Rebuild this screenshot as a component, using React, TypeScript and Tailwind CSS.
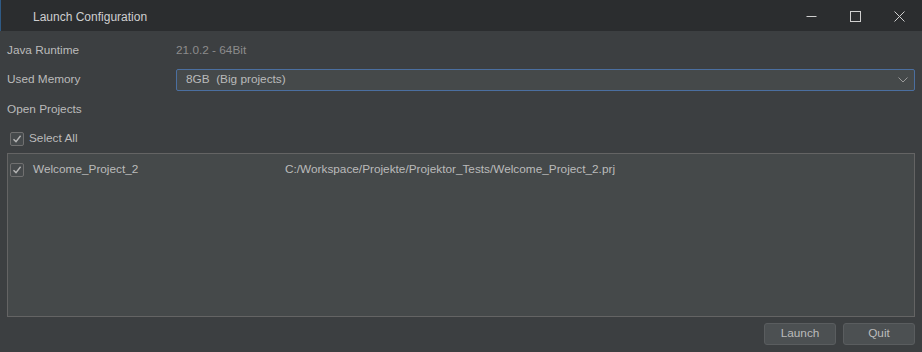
import { useState } from "react";

function Check({ checked }: { checked: boolean }) {
  return (
    <span className="flex h-[14px] w-[14px] items-center justify-center rounded-[2px] border border-[#707070] bg-[#464a4c]">
      {checked && (
        <svg width="10" height="10" viewBox="0 0 10 10">
          <path d="M1.5 5.2 L4 7.6 L8.6 1.8" fill="none" stroke="#b4b4b4" strokeWidth="1.4" />
        </svg>
      )}
    </span>
  );
}

export default function App() {
  const [selectAll] = useState(true);

  return (
    <div
      className="flex h-[352px] w-[922px] flex-col overflow-hidden bg-[#3c3f41] text-[11.8px] text-[#bbbbbb]"
      style={{ fontFamily: '"Liberation Sans", Arial, sans-serif' }}
    >
      {/* title bar */}
      <div className="flex h-[31px] shrink-0 items-center border-l border-[#2f5a85] bg-[#2b2d2f]">
        <span className="ml-[32px] mt-[2px] text-[12px] text-[#cfcfcf]">Launch Configuration</span>
        <div className="ml-auto flex h-full items-center pt-[2px]">
          <div className="flex h-full w-[44px] items-center justify-center">
            <svg width="11" height="11" viewBox="0 0 11 11">
              <path d="M0.5 5.5 H10.5" stroke="#cfcfcf" strokeWidth="1" />
            </svg>
          </div>
          <div className="flex h-full w-[44px] items-center justify-center">
            <svg width="11" height="11" viewBox="0 0 11 11">
              <rect x="0.5" y="0.5" width="10" height="10" fill="none" stroke="#cfcfcf" strokeWidth="1" />
            </svg>
          </div>
          <div className="flex h-full w-[44px] items-center justify-center">
            <svg width="11" height="11" viewBox="0 0 11 11">
              <path d="M0.5 0.5 L10.5 10.5 M10.5 0.5 L0.5 10.5" stroke="#cfcfcf" strokeWidth="1" />
            </svg>
          </div>
          <div className="w-[1px]" />
        </div>
      </div>

      {/* body */}
      <div className="flex flex-1 flex-col px-[7px] pt-[9px]">
        <div className="flex h-[21px] items-center">
          <span className="w-[169px]">Java Runtime</span>
          <span className="text-[#8c8c8c]">21.0.2 - 64Bit</span>
        </div>
        <div className="mt-[8px] flex h-[22px] items-center">
          <span className="w-[169px]">Used Memory</span>
          <div className="flex h-[22px] flex-1 items-center rounded-[2px] border border-[#4b6fa0] bg-[#45494a] pl-[9px] pr-[6px]">
            <span>8GB&nbsp;&nbsp;(Big projects)</span>
            <svg className="ml-auto" width="10" height="6" viewBox="0 0 10 6">
              <path d="M0.5 0.5 L5 5 L9.5 0.5" fill="none" stroke="#9a9a9a" strokeWidth="1" />
            </svg>
          </div>
        </div>
        <div className="mt-[9px] flex h-[20px] items-center">Open Projects</div>
        <label className="mt-[9px] flex h-[20px] items-center gap-[5px] pl-[3px]">
          <Check checked={selectAll} />
          <span>Select All</span>
        </label>
        <div className="mt-[4px] h-[164px] border border-[#646464] bg-[#45494a]">
          <div className="flex h-[28px] items-center pl-[2px] pt-[3px]">
            <Check checked />
            <span className="ml-[9px] w-[252px]">Welcome_Project_2</span>
            <span>C:/Workspace/Projekte/Projektor_Tests/Welcome_Project_2.prj</span>
          </div>
        </div>
        <div className="mt-[6px] flex justify-end gap-[7px]">
          <button className="h-[22px] w-[72px] rounded-[3px] border border-[#5a5d5f] bg-[#4c5052] text-[#bbbbbb]">
            Launch
          </button>
          <button className="h-[22px] w-[72px] rounded-[3px] border border-[#5a5d5f] bg-[#4c5052] text-[#bbbbbb]">
            Quit
          </button>
        </div>
      </div>
    </div>
  );
}
